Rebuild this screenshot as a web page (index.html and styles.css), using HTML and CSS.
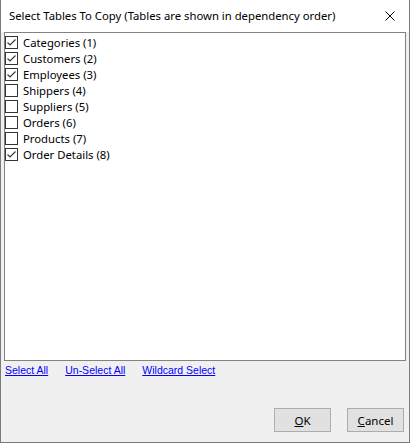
FILE: index.html
```html
<!DOCTYPE html>
<html>
<head>
<meta charset="utf-8">
<link rel="stylesheet" href="styles.css">
</head>
<body>
<div class="window">
  <div class="titlebar">
    <span class="title">Select Tables To Copy (Tables are shown in dependency order)</span>
    <svg class="close" width="10" height="10" viewBox="0 0 10 10"><path d="M0.5 0.5 L9.5 9.5 M9.5 0.5 L0.5 9.5" stroke="#000" stroke-width="1" fill="none"/></svg>
  </div>
  <div class="body">
    <div class="listbox">
      <div class="item"><span class="cb checked"><svg width="11" height="11" viewBox="0 0 11 11"><path d="M1.5 5.5 L4 8 L9.5 2.5" stroke="#333" stroke-width="1.1" fill="none"/></svg></span><span>Categories (1)</span></div>
      <div class="item"><span class="cb checked"><svg width="11" height="11" viewBox="0 0 11 11"><path d="M1.5 5.5 L4 8 L9.5 2.5" stroke="#333" stroke-width="1.1" fill="none"/></svg></span><span>Customers (2)</span></div>
      <div class="item"><span class="cb checked"><svg width="11" height="11" viewBox="0 0 11 11"><path d="M1.5 5.5 L4 8 L9.5 2.5" stroke="#333" stroke-width="1.1" fill="none"/></svg></span><span>Employees (3)</span></div>
      <div class="item"><span class="cb"></span><span>Shippers (4)</span></div>
      <div class="item"><span class="cb"></span><span>Suppliers (5)</span></div>
      <div class="item"><span class="cb"></span><span>Orders (6)</span></div>
      <div class="item"><span class="cb"></span><span>Products (7)</span></div>
      <div class="item"><span class="cb checked"><svg width="11" height="11" viewBox="0 0 11 11"><path d="M1.5 5.5 L4 8 L9.5 2.5" stroke="#333" stroke-width="1.1" fill="none"/></svg></span><span>Order Details (8)</span></div>
    </div>
    <div class="links">
      <a class="link">Select All</a>
      <a class="link">Un-Select All</a>
      <a class="link">Wildcard Select</a>
    </div>
    <div class="buttons">
      <button class="btn btn-ok"><u>O</u>K</button>
      <button class="btn btn-cancel"><u>C</u>ancel</button>
    </div>
  </div>
</div>
</body>
</html>
```

FILE: styles.css
```css
html, body {
  margin: 0;
  padding: 0;
  background: #f0f0f0;
}
body {
  font-family: "Noto Sans", "Open Sans", sans-serif;
  font-size: 11.3px;
  color: #000;
}
.window {
  width: 410px;
  height: 443px;
  box-sizing: border-box;
  border: 1px solid #7a7a7a;
  border-top: none;
  background: #f0f0f0;
  display: flex;
  flex-direction: column;
}
.titlebar {
  height: 32px;
  background: #fff;
  display: flex;
  align-items: center;
  justify-content: space-between;
  padding: 0 14px 0 8px;
  flex: none;
}
.title {
  font-size: 11.3px;
  line-height: 16px;
  margin-top: -1px;
}
.close {
  display: block;
  margin-top: -1px;
}
.body {
  flex: 1;
  display: flex;
  flex-direction: column;
  padding: 0 3px;
}
.listbox {
  height: 329px;
  box-sizing: border-box;
  border: 1px solid #828282;
  background: #fff;
  padding: 1px 0 0 0;
  flex: none;
}
.item {
  display: flex;
  align-items: center;
  height: 16px;
  gap: 5px;
}
.cb {
  width: 13px;
  height: 13px;
  box-sizing: border-box;
  border: 1px solid #333;
  background: #fff;
  display: flex;
  align-items: center;
  justify-content: center;
  flex: none;
}
.cb svg { display: block; }
.links {
  display: flex;
  gap: 17px;
  padding: 1px 0 0 1px;
  height: 16px;
  line-height: 16px;
  font-family: "Liberation Sans", Arial, sans-serif;
  font-size: 10.5px;
}
.link {
  color: #0000ff;
  text-decoration: underline;
}
.buttons {
  margin-top: auto;
  display: flex;
  justify-content: flex-end;
  gap: 16px;
  padding: 0 2px 10px 0;
}
.btn {
  width: 57px;
  height: 24px;
  box-sizing: border-box;
  border: 1px solid #adadad;
  background: #e1e1e1;
  font-family: "Noto Sans", "Open Sans", sans-serif;
  font-size: 11.5px;
  color: #000;
  padding: 0;
  margin: 0;
}
.btn u { text-decoration: underline; }
```
